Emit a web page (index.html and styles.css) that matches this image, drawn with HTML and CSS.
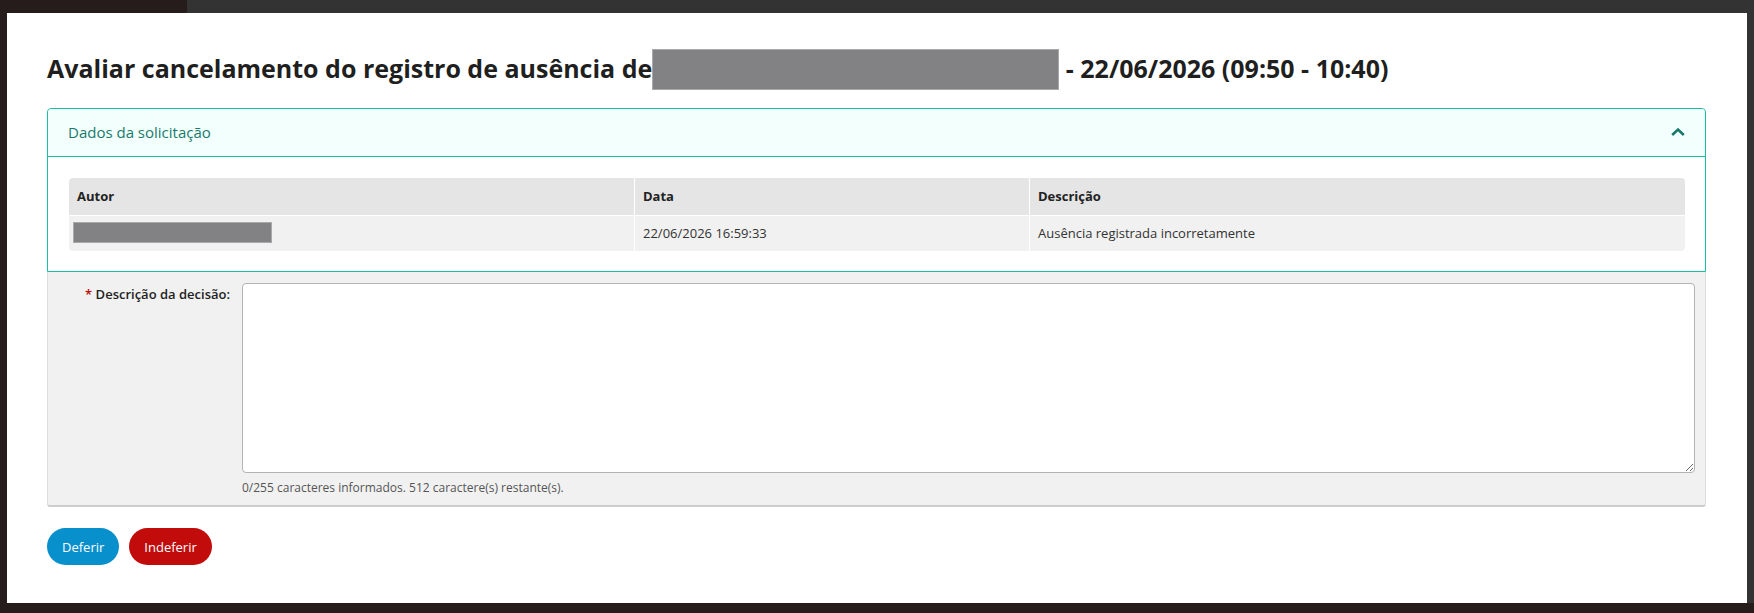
FILE: index.html
```html
<!DOCTYPE html>
<html lang="pt-BR">

<head>
    <meta charset="UTF-8">
    <meta name="viewport" content="width=device-width, initial-scale=1.0">
    <title>Avaliar cancelamento</title>
    <link rel="stylesheet" href="styles.css">
</head>

<body>
    <div class="modal">
        <h1 class="modal-title">Avaliar cancelamento do registro de ausência de<span class="redacted title-redacted"></span> - 22/06/2026 (09:50 - 10:40)</h1>

        <div class="box">
            <div class="box-header">
                <h3>Dados da solicitação</h3>
                <svg class="chevron" width="14" height="8" viewBox="0 0 14 8">
                    <polyline points="1.2,7 7,1.6 12.8,7" fill="none" stroke="#17796a" stroke-width="2.6" />
                </svg>
            </div>
            <div class="box-body">
                <table class="info-table">
                    <thead>
                        <tr>
                            <th class="col-autor">Autor</th>
                            <th class="col-data">Data</th>
                            <th>Descrição</th>
                        </tr>
                    </thead>
                    <tbody>
                        <tr>
                            <td><span class="redacted cell-redacted"></span></td>
                            <td>22/06/2026 16:59:33</td>
                            <td>Ausência registrada incorretamente</td>
                        </tr>
                    </tbody>
                </table>
            </div>
        </div>

        <form class="decision-form">
            <div class="form-fields">
                <div class="form-row">
                    <label for="descricao"><span class="required">*</span> Descrição da decisão:</label>
                    <div class="field">
                        <textarea id="descricao"></textarea>
                        <p class="help-text">0/255 caracteres informados. 512 caractere(s) restante(s).</p>
                    </div>
                </div>
            </div>
            <div class="actions">
                <button type="button" class="btn btn-success">Deferir</button>
                <button type="button" class="btn btn-danger">Indeferir</button>
            </div>
        </form>
    </div>
</body>

</html>
```

FILE: styles.css
```css
body {
    font-family: 'Open Sans', 'Liberation Sans', sans-serif;
    margin: 0;
    padding: 13px 7px 10px 7px;
    color: #222;
    background:
        linear-gradient(#261c1b, #261c1b) left bottom / 100% 10px no-repeat,
        linear-gradient(to right, #251c1b 187px, #333 187px);
    height: 613px;
    box-sizing: border-box;
    overflow: hidden;
}

.modal {
    background-color: #fff;
    height: 590px;
    box-sizing: border-box;
    padding: 40px 41px 0 40px;
}

.modal-title {
    font-size: 25px;
    font-weight: 700;
    line-height: 30px;
    margin: 0 0 25px 0;
    color: #1f1f1f;
}

.redacted {
    display: inline-block;
    background-color: #828285;
    border: 1px solid #a9a9ab;
    box-sizing: border-box;
}

.title-redacted {
    width: 407px;
    height: 41px;
    vertical-align: -4px;
    margin-top: -4px;
    margin-bottom: -8px;
}

/* painel de dados */
.box {
    border: 1px solid #17bfa3;
    border-radius: 4px 4px 0 0;
}

.box-header {
    display: flex;
    justify-content: space-between;
    align-items: center;
    background-color: #f3fffd;
    border-bottom: 1px solid #17bfa3;
    padding: 13px 20px 14px 20px;
    border-radius: 4px 4px 0 0;
}

.box-header h3 {
    margin: 0;
    font-size: 15px;
    font-weight: 400;
    line-height: 20px;
    color: #197a6c;
}

.chevron {
    display: block;
}

.box-body {
    padding: 21px 20px 20px 21px;
}

.info-table {
    width: 100%;
    border-collapse: separate;
    border-spacing: 0;
    table-layout: fixed;
    font-size: 13px;
    line-height: 20px;
}

.info-table th {
    text-align: left;
    font-weight: 700;
    background-color: #e5e5e5;
    padding: 8px 8px 9px 8px;
    color: #222;
}

.info-table td {
    background-color: #f1f1f1;
    padding: 7px 8px 8px 8px;
    border-top: 1px solid #fff;
    color: #333;
}

.info-table th + th,
.info-table td + td {
    border-left: 1px solid #fff;
}

.info-table th:first-child {
    border-top-left-radius: 4px;
}

.info-table th:last-child {
    border-top-right-radius: 4px;
}

.info-table td:first-child {
    border-bottom-left-radius: 4px;
}

.info-table td:last-child {
    border-bottom-right-radius: 4px;
}

.col-autor {
    width: 549px;
}

.col-data {
    width: 378px;
}

.cell-redacted {
    display: block;
    width: 199px;
    height: 21px;
    margin: -1px 0 0 -4px;
}

/* formulário */
.form-fields {
    background-color: #f1f1f1;
    border: 1px solid #dcdcdc;
    border-top: none;
    border-bottom: 2px solid #cdcdcd;
    border-radius: 0 0 3px 3px;
    padding: 11px 10px 9px 0;
}

.form-row {
    display: flex;
    gap: 12px;
}

.form-row label {
    width: 182px;
    flex-shrink: 0;
    text-align: right;
    font-size: 13px;
    font-weight: 600;
    line-height: 20px;
    color: #222;
    padding-top: 1px;
}

.required {
    color: #c0090a;
}

.field {
    flex: 1;
}

.field textarea {
    display: block;
    width: 100%;
    height: 190px;
    box-sizing: border-box;
    border: 1px solid #b3b3b3;
    border-radius: 4px;
    background-color: #fff;
    font-family: inherit;
    font-size: 13px;
    margin: 0;
}

.help-text {
    margin: 6px 0 0 0;
    font-size: 12px;
    line-height: 17px;
    color: #555;
}

.actions {
    display: flex;
    gap: 10px;
    margin-top: 21px;
}

.btn {
    font-family: inherit;
    font-size: 13px;
    height: 37px;
    padding: 0 15px;
    border: none;
    border-radius: 19px;
    color: #fff;
    cursor: pointer;
}

.btn-success {
    background-color: #0890cd;
}

.btn-danger {
    background-color: #c20b0b;
}
```
